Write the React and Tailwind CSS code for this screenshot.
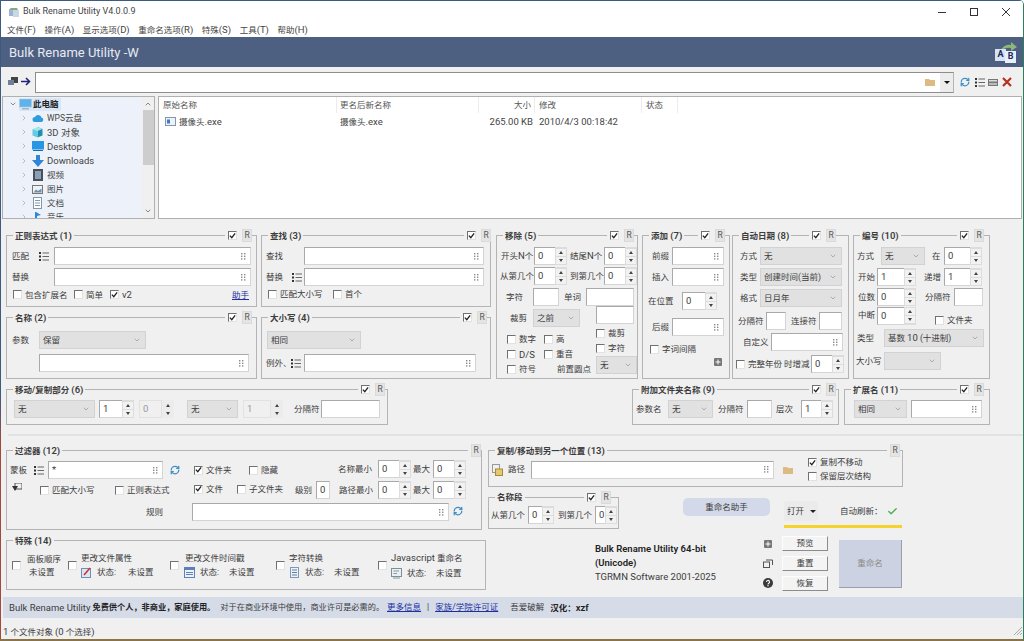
import { ChevronDown, ChevronRight, ChevronUp, RefreshCw, Check as CheckIcon } from "lucide-react";

const Lat = ({ children }) => <span className="text-[9.5px]">{children}</span>;

const L = ({ className = "", children }) => <span className={`whitespace-nowrap shrink-0 ${className}`}>{children}</span>;

const Grip = () => (
    <svg width="5" height="7" viewBox="0 0 5 7" className="shrink-0 fill-[#8a8a8a]">
        <rect x="0" y="0" width="1.4" height="1.4" /><rect x="3" y="0" width="1.4" height="1.4" />
        <rect x="0" y="2.6" width="1.4" height="1.4" /><rect x="3" y="2.6" width="1.4" height="1.4" />
        <rect x="0" y="5.2" width="1.4" height="1.4" /><rect x="3" y="5.2" width="1.4" height="1.4" />
    </svg>
);

const Input = ({ className = "", grip, children }) => (
    <div className={`h-[18px] shrink-0 bg-white border border-[#a9a9a9] border-r-[#d4d4d4] border-b-[#d4d4d4] flex items-center justify-between pl-[3px] pr-[4px] text-[9.5px] ${className}`}>
        <span>{children}</span>
        {grip && <Grip />}
    </div>
);

const Select = ({ className = "", disabled, children }) => (
    <div className={`h-[18px] shrink-0 bg-[#e1e1e1] border border-[#d2d2d2] flex items-center justify-between pl-[3px] pr-[4px] ${disabled ? "text-[#9a9a9a]" : "text-[#3c3c3c]"} ${className}`}>
        <span className="whitespace-nowrap">{children}</span>
        <ChevronDown size={8} strokeWidth={1.5} className="text-[#777] shrink-0" />
    </div>
);

const Spin = ({ className = "", disabled, children }) => (
    <div className={`h-[18px] shrink-0 flex items-stretch ${className}`}>
        <div className={`flex-1 flex items-center pl-[3px] text-[9.5px] border ${disabled ? "bg-[#f0f0f0] border-[#e2e2e2] text-[#999]" : "bg-white border-[#a9a9a9] border-r-0 border-b-[#d4d4d4]"}`}>{children}</div>
        <div className={`w-[12px] flex flex-col items-center justify-center gap-[1px] ${disabled ? "bg-[#ececec]" : "bg-[#dcdcdc]"}`}>
            <div className={`w-[10px] h-[7px] flex items-center justify-center ${disabled ? "" : "bg-[#f2f2f2]"}`}>
                <div className="border-x-[2.5px] border-x-transparent border-b-[3px] border-b-[#444]" />
            </div>
            <div className={`w-[10px] h-[7px] flex items-center justify-center ${disabled ? "" : "bg-[#f2f2f2]"}`}>
                <div className="border-x-[2.5px] border-x-transparent border-t-[3px] border-t-[#444]" />
            </div>
        </div>
    </div>
);

const Cb = ({ checked, className = "" }) => (
    <div className={`w-[9px] h-[9px] shrink-0 bg-white border border-t-[#707070] border-l-[#707070] border-r-[#e2e2e2] border-b-[#e2e2e2] flex items-center justify-center ${className}`}>
        {checked && (
            <svg width="8" height="8" viewBox="0 0 8 8" className="fill-none stroke-[#222] stroke-[1.5]">
                <path d="M1 3.5 L3.2 6 L7 1" />
            </svg>
        )}
    </div>
);

const ListIc = ({ className = "" }) => (
    <svg width="10" height="9" viewBox="0 0 10 9" className={`shrink-0 ${className}`}>
        <rect x="0" y="0" width="2" height="2" fill="#333" /><rect x="0" y="3.5" width="2" height="2" fill="#333" /><rect x="0" y="7" width="2" height="2" fill="#333" />
        <path d="M3.5 1 H10 M3.5 4.5 H10 M3.5 8 H10" stroke="#666" strokeWidth="1" />
    </svg>
);

const Folder = ({ className = "" }) => (
    <svg width="10" height="8" viewBox="0 0 10 8" className={`shrink-0 ${className}`}>
        <path d="M0 1 H4 L5 2 H10 V8 H0 Z" fill="#dcbb82" />
    </svg>
);

const Refresh = ({ className = "" }) => <RefreshCw size={10} strokeWidth={3} className={`text-[#3f8fc6] shrink-0 ${className}`} />;

const Panel = ({ name, num, cb = true, r = true, hr = "mr-[3px]", className = "", children }) => (
    <div className={`border border-[#b4b4b4] shrink-0 flex flex-col ${className}`}>
        <div className={`-mt-[8px] h-[15px] flex items-center justify-between ml-[6px] ${hr}`}>
            <span className="bg-[#f0f0f0] px-[2px] font-semibold whitespace-nowrap">
                {name}{num && <> <Lat>({num})</Lat></>}
            </span>
            <span className="bg-[#f0f0f0] pl-[3px] flex items-center gap-[5px]">
                {cb && <Cb checked />}
                {r && <span className="w-[10px] h-[13px] bg-[#e4e4e4] border border-[#dadada] flex items-center justify-center text-[8.5px] text-[#555]">R</span>}
            </span>
        </div>
        {children}
    </div>
);

const Row = ({ className = "", children }) => <div className={`flex items-center ${className}`}>{children}</div>;

const CbL = ({ checked, className = "", children }) => (
    <div className={`flex items-center gap-[3px] shrink-0 whitespace-nowrap ${className}`}>
        <Cb checked={checked} />
        <span>{children}</span>
    </div>
);

const M = ({ t, k }) => <span className="whitespace-nowrap">{t}<Lat>({k})</Lat></span>;

const Btn = ({ children }) => (
    <div className="h-[15px] w-[46px] bg-[#f4f4f4] border border-t-[#fdfdfd] border-l-[#fdfdfd] border-r-[#8c8c8c] border-b-[#8c8c8c] flex items-center justify-center">{children}</div>
);

const treeRows = [
    ["WPS云盘", <svg key="a" width="12" height="10" viewBox="0 0 12 10"><path d="M3 9 A2.5 2.5 0 0 1 3 4 A3.5 3.5 0 0 1 9.5 4.5 A2.3 2.3 0 0 1 9.5 9 Z" fill="#2f9be0" /></svg>],
    ["3D 对象", <svg key="b" width="11" height="12" viewBox="0 0 11 12"><path d="M5.5 1 L10.5 3 V9.5 L5.5 11.5 Z" fill="#1f8fb0" /><path d="M5.5 1 L0.5 3 L5.5 5 L10.5 3 Z" fill="#a6e4f2" /><path d="M0.5 3 V9.5 L5.5 11.5 V5 Z" fill="#63cbe4" /></svg>],
    ["Desktop", <svg key="c" width="12" height="10" viewBox="0 0 12 10"><rect x="0" y="0" width="12" height="8.5" fill="#2796e4" /><rect x="1" y="9" width="10" height="1" fill="#0f6cb5" /></svg>],
    ["Downloads", <svg key="d" width="12" height="12" viewBox="0 0 12 12"><path d="M4 0 H8 V5 H12 L6 12 L0 5 H4 Z" fill="#2f86d8" /></svg>],
    ["视频", <svg key="e" width="10" height="12" viewBox="0 0 10 12"><rect width="10" height="12" fill="#4a4f58" /><rect x="2" y="2" width="6" height="8" fill="#8aa0b8" /></svg>],
    ["图片", <svg key="f" width="11" height="9" viewBox="0 0 11 9"><rect x="0.5" y="0.5" width="10" height="8" fill="#eef2f6" stroke="#777" /><path d="M1.5 7.5 L4 4.5 L6 6 L9.5 3.5 V7.5 Z" fill="#6f8fa8" /></svg>],
    ["文档", <svg key="g" width="9" height="12" viewBox="0 0 9 12"><rect x="0.5" y="0.5" width="8" height="11" fill="#fff" stroke="#8a96a4" /><path d="M2 3.5 H7 M2 6 H7 M2 8.5 H7" stroke="#7a9ab8" /></svg>],
    ["音乐", <svg key="h" width="10" height="12" viewBox="0 0 10 12"><path d="M3 1 L8 4 L4 5 V10 H2 V1 Z" fill="#2f86d8" /></svg>],
];

const App = () => {
    return (
        <div className="w-[1024px] h-[641px] overflow-hidden pl-[1px] pt-[1px] border-r border-r-[#2e7d5b] border-b-2 border-b-[#8b7448] rounded-tr-[5px] bg-[linear-gradient(180deg,#3d5a82_0%,#3d5a82_62%,#a5483c_70%,#a5483c_100%)] font-['Roboto','Noto_Sans_CJK_SC',sans-serif] text-[8.5px] leading-none text-[#3c3c3c]">
            <div className="w-full h-full bg-[#f0f0f0] flex flex-col overflow-hidden">
                {/* title bar and menu */}
                <div className="bg-white h-[36px] shrink-0">
                    <div className="h-[21px] flex items-center pl-[8px]">
                        <svg width="10" height="10" viewBox="0 0 10 10" className="shrink-0">
                            <rect x="0" y="2" width="6" height="7" fill="#9db3cf" /><rect x="4" y="3" width="6" height="7" fill="#c9d6e6" /><path d="M1 1 H8 L9 3 H2 Z" fill="#7fae7a" />
                        </svg>
                        <span className="ml-[4px] text-[9px] text-[#444]">Bulk Rename Utility V4.0.0.9</span>
                        <div className="ml-auto flex items-center gap-[22px] pr-[12px] text-[#333]">
                            <svg width="10" height="10" viewBox="0 0 10 10"><path d="M1 5.5 H9" stroke="currentColor" /></svg>
                            <svg width="10" height="10" viewBox="0 0 10 10"><rect x="1.5" y="1.5" width="7" height="7" fill="none" stroke="currentColor" /></svg>
                            <svg width="10" height="10" viewBox="0 0 10 10"><path d="M1 1 L9 9 M9 1 L1 9" stroke="currentColor" /></svg>
                        </div>
                    </div>
                    <div className="h-[15px] flex items-center pl-[6px] gap-[8.6px] text-[#444]">
                        <M t="文件" k="F" />
                        <M t="操作" k="A" />
                        <M t="显示选项" k="D" />
                        <M t="重命名选项" k="R" />
                        <M t="特殊" k="S" />
                        <M t="工具" k="T" />
                        <M t="帮助" k="H" />
                    </div>
                </div>

                {/* banner */}
                <div className="h-[30px] shrink-0 bg-[#4e6082] flex items-center justify-between pl-[8px] pr-[7px]">
                    <span className="text-[13px] text-[#e6eaf2]">Bulk Rename Utility -W</span>
                    <div className="relative w-[21px] h-[21px]">
                        <svg width="21" height="10" viewBox="0 0 21 10" className="absolute top-0 left-[2px]"><path d="M2 10 Q8 1 14 3 V0 L20 5 L14 9 V6 Q8 5 2 10 Z" fill="#8db87a" /></svg>
                        <span className="absolute left-0 top-[7px] w-[11px] h-[12px] bg-[#d7e3f2] flex items-center justify-center text-[9px] font-bold text-[#1b2a5c]">A</span>
                        <span className="absolute right-0 top-[9px] w-[11px] h-[12px] bg-[#e9f0f8] flex items-center justify-center text-[9px] font-bold text-[#1b2a5c]">B</span>
                    </div>
                </div>

                {/* path toolbar */}
                <div className="h-[29px] shrink-0 flex items-center pl-[7px] pt-[1px]">
                    <svg width="10" height="9" viewBox="0 0 10 9" className="shrink-0 -mt-[2px]"><rect x="3" y="0" width="7" height="6" fill="#444" /><rect x="0" y="3" width="6" height="5" fill="#6f8096" /></svg>
                    <svg width="10" height="9" viewBox="0 0 10 9" className="ml-[3px] shrink-0 -mt-[2px]"><path d="M0 4.5 H8 M5 1 L8.5 4.5 L5 8" fill="none" stroke="#23237a" strokeWidth="1.6" /></svg>
                    <div className="ml-[4px] w-[919px] h-[21px] shrink-0 bg-white border border-[#8e8e8e] border-r-[#b5b5b5] flex items-center justify-end">
                        <Folder className="mr-[5px]" />
                        <div className="w-[13px] h-[19px] bg-[#ececec] flex items-center justify-center">
                            <div className="border-x-[3px] border-x-transparent border-t-[3px] border-t-[#111]" />
                        </div>
                    </div>
                    <Refresh className="ml-[6px]" />
                    <ListIc className="ml-[5px]" />
                    <svg width="10" height="7" viewBox="0 0 10 7" className="ml-[3px] shrink-0"><rect x="0.5" y="0.5" width="9" height="2.5" fill="#ddd" stroke="#777" /><rect x="0.5" y="3.5" width="9" height="3" fill="#bbb" stroke="#777" /></svg>
                    <svg width="10" height="10" viewBox="0 0 10 10" className="ml-[4px] shrink-0"><path d="M1 1 L9 9 M9 1 L1 9" stroke="#b5321f" strokeWidth="2.2" /></svg>
                </div>

                {/* folder tree and file list */}
                <div className="h-[123px] shrink-0 flex pl-[1px] pr-[1px]">
                    <div className="w-[153px] h-full bg-[#edf2fa] border border-[#b0b0b0] flex overflow-hidden">
                        <div className="flex-1 overflow-hidden">
                            <div className="h-[14px] flex items-center pl-[6px]">
                                <ChevronDown size={8} strokeWidth={2} className="text-[#555]" />
                                <div className="ml-[2px] bg-[#d8e6f6] h-[13px] flex items-center pr-[2px]">
                                    <svg width="13" height="11" viewBox="0 0 13 11"><rect x="0.5" y="0" width="12" height="8" fill="#5fb2ea" stroke="#a9c8df" strokeWidth="0.6" /><rect x="3" y="9" width="7" height="1.5" fill="#9fb7cc" /></svg>
                                    <span className="ml-[1px] font-semibold text-[#222]">此电脑</span>
                                </div>
                            </div>
                            {treeRows.map(([label, icon]) => (
                                <div key={label} className="h-[14.2px] flex items-center pl-[17px]">
                                    <ChevronRight size={8} strokeWidth={2} className="text-[#a0a0a0] shrink-0" />
                                    <div className="ml-[3px] w-[13px] flex justify-center shrink-0">{icon}</div>
                                    <span className="ml-[3px] whitespace-nowrap text-[#444]">{/^[A-Z3]/.test(label) && label !== "WPS云盘" ? <Lat>{label}</Lat> : label}</span>
                                </div>
                            ))}
                        </div>
                        <div className="w-[12px] h-full bg-[#f0f0f0] flex flex-col items-center shrink-0">
                            <ChevronUp size={8} strokeWidth={2} className="text-[#555] mt-[3px]" />
                            <div className="w-[11px] h-[55px] bg-[#cdcdcd] mt-[2px]" />
                            <ChevronDown size={8} strokeWidth={2} className="text-[#555] mt-auto mb-[3px]" />
                        </div>
                    </div>
                    <div className="ml-[3px] flex-1 bg-white border border-[#b0b0b0]">
                        <div className="h-[16px] flex items-center text-[#555]">
                            <div className="w-[178px] pl-[4px] h-full flex items-center border-r border-r-[#ececec]">原始名称</div>
                            <div className="w-[142px] pl-[3px] h-full flex items-center border-r border-r-[#ececec]">更名后新名称</div>
                            <div className="w-[56px] pr-[3px] h-full flex items-center justify-end border-r border-r-[#ececec]">大小</div>
                            <div className="w-[107px] pl-[4px] h-full flex items-center border-r border-r-[#ececec]">修改</div>
                            <div className="w-[36px] pl-[4px] h-full flex items-center border-r border-r-[#ececec]">状态</div>
                        </div>
                        <div className="h-[17px] flex items-center text-[#444]">
                            <div className="w-[178px] pl-[6px] flex items-center">
                                <svg width="11" height="9" viewBox="0 0 11 9" className="shrink-0"><rect x="0.5" y="0.5" width="10" height="8" fill="#eef3fa" stroke="#8496ab" /><rect x="2" y="2.5" width="3" height="4" fill="#3a7fc4" /></svg>
                                <span className="ml-[3px]">摄像头<Lat>.exe</Lat></span>
                            </div>
                            <div className="w-[142px] pl-[3px]">摄像头<Lat>.exe</Lat></div>
                            <div className="w-[56px] pr-[2px] text-right whitespace-nowrap"><Lat>265.00 KB</Lat></div>
                            <div className="pl-[4px] whitespace-nowrap"><Lat>2010/4/3 00:18:42</Lat></div>
                        </div>
                    </div>
                </div>

                {/* rename panels, first block */}
                <div className="flex pl-[5px] pt-[16px] shrink-0">
                    <div className="w-[485px] shrink-0 flex flex-col gap-[10px]">
                        <div className="flex gap-[4px]">
                            <Panel name="正则表达式" num="1" hr="mr-[4px]" className="w-[251px] h-[72px]">
                                <Row className="mt-[4px] pl-[5px]">
                                    <L className="w-[27px]">匹配</L><ListIc /><Input grip className="ml-[5px] w-[197px]" />
                                </Row>
                                <Row className="mt-[3px] pl-[5px]">
                                    <L className="w-[42px]">替换</L><Input grip className="w-[197px]" />
                                </Row>
                                <Row className="mt-[4px] pl-[6px]">
                                    <CbL className="w-[61px]">包含扩展名</CbL>
                                    <CbL className="w-[36px]">简单</CbL>
                                    <CbL checked><Lat>v2</Lat></CbL>
                                    <span className="ml-auto mr-[7px] text-[#1a2fa0] underline">助手</span>
                                </Row>
                            </Panel>
                            <Panel name="查找" num="3" hr="-mr-[1px]" className="w-[230px] h-[72px]">
                                <Row className="mt-[4px] pl-[4px]">
                                    <L className="w-[38px]">查找</L><Input grip className="w-[180px]" />
                                </Row>
                                <Row className="mt-[3px] pl-[4px]">
                                    <L className="w-[26px]">替换</L><ListIc /><Input grip className="ml-[2px] w-[180px]" />
                                </Row>
                                <Row className="mt-[4px] pl-[6px]">
                                    <CbL className="w-[65px]">匹配大小写</CbL>
                                    <CbL>首个</CbL>
                                </Row>
                            </Panel>
                        </div>
                        <div className="flex gap-[4px]">
                            <Panel name="名称" num="2" hr="mr-[4px]" className="w-[251px] h-[62px]">
                                <Row className="mt-[6px] pl-[5px]">
                                    <L className="w-[27px]">参数</L><Select className="w-[107px]">保留</Select>
                                </Row>
                                <Row className="mt-[5px] pl-[32px]">
                                    <Input grip className="w-[210px]" />
                                </Row>
                            </Panel>
                            <Panel name="大小写" num="4" className="w-[230px] h-[62px]">
                                <Row className="mt-[6px] pl-[5px]">
                                    <Select className="w-[94px]">相同</Select>
                                </Row>
                                <Row className="mt-[5px] pl-[4px]">
                                    <L className="w-[25px]">例外、</L><ListIc /><Input grip className="ml-[3px] w-[172px]" />
                                </Row>
                            </Panel>
                        </div>
                    </div>
                    <Panel name="移除" num="5" className="ml-[5px] w-[142px] h-[144px]">
                        <Row className="mt-[4px] pl-[4px]">
                            <L className="w-[33px]">开头<Lat>N</Lat>个</L><Spin className="w-[33px]">0</Spin>
                            <L className="ml-[3px] w-[34px]">结尾<Lat>N</Lat>个</L><Spin className="w-[33px]">0</Spin>
                        </Row>
                        <Row className="mt-[2px] pl-[3px]">
                            <L className="w-[34px]">从第几个</L><Spin className="w-[33px]">0</Spin>
                            <L className="ml-[3px] w-[34px]">到第几个</L><Spin className="w-[33px]">0</Spin>
                        </Row>
                        <Row className="mt-[3px] pl-[9px]">
                            <L className="w-[27px]">字符</L><Input className="w-[26px]" />
                            <L className="ml-[5px] w-[22px]">单词</L><Input className="w-[48px]" />
                        </Row>
                        <div className="flex">
                            <div className="w-[99px] shrink-0">
                                <Row className="mt-[3px] pl-[13px]">
                                    <L className="w-[23px]">裁剪</L><Select className="w-[47px] h-[17px]">之前</Select>
                                </Row>
                                <Row className="mt-[5px] h-[15px] pl-[10px]">
                                    <CbL className="w-[37px]">数字</CbL><CbL>高</CbL>
                                </Row>
                                <Row className="h-[15px] pl-[10px]">
                                    <CbL className="w-[37px]"><Lat>D/S</Lat></CbL><CbL>重音</CbL>
                                </Row>
                                <Row className="h-[15px] pl-[10px]">
                                    <CbL className="w-[50px]">符号</CbL><L>前置圆点</L>
                                </Row>
                            </div>
                            <div className="flex-1 min-w-0">
                                <Input className="w-[38px]" />
                                <CbL className="mt-[3px] h-[12px]">裁剪</CbL>
                                <CbL className="mt-[3px] h-[12px]">字符</CbL>
                                <Select className="mt-[2px] w-[41px]">无</Select>
                            </div>
                        </div>
                    </Panel>
                    <Panel name="添加" num="7" hr="mr-[4px]" className="ml-[4px] w-[88px] h-[144px]">
                        <Row className="mt-[4px] pl-[9px]">
                            <L className="w-[20px]">前缀</L><Input grip className="w-[52px]" />
                        </Row>
                        <Row className="mt-[3px] pl-[9px]">
                            <L className="w-[20px]">插入</L><Input grip className="w-[52px]" />
                        </Row>
                        <Row className="mt-[6px] pl-[5px]">
                            <L className="w-[34px]">在位置</L><Spin className="w-[35px]">0</Spin>
                        </Row>
                        <Row className="mt-[8px] pl-[9px]">
                            <L className="w-[20px]">后缀</L><Input grip className="w-[52px]" />
                        </Row>
                        <CbL className="mt-[7px] ml-[7px] h-[12px]">字词间隔</CbL>
                        <Row className="mt-[3px] justify-end pr-[7px]">
                            <svg width="8" height="8" viewBox="0 0 8 8"><rect width="8" height="8" rx="1" fill="#777" /><path d="M4 1.5 V6.5 M1.5 4 H6.5" stroke="#fff" /></svg>
                        </Row>
                    </Panel>
                    <Panel name="自动日期" num="8" hr="mr-[12px]" className="ml-[2px] w-[117px] h-[144px]">
                        <Row className="mt-[4px] pl-[7px]">
                            <L className="w-[20px]">方式</L><Select className="w-[82px]">无</Select>
                        </Row>
                        <Row className="mt-[3px] pl-[7px]">
                            <L className="w-[20px]">类型</L><Select className="w-[82px]">创建时间(当前)</Select>
                        </Row>
                        <Row className="mt-[3px] pl-[7px]">
                            <L className="w-[20px]">格式</L><Select className="w-[82px]">日月年</Select>
                        </Row>
                        <Row className="mt-[5px] pl-[5px]">
                            <L className="w-[28px]">分隔符</L><Input className="w-[20px]" />
                            <L className="ml-[5px] w-[28px]">连接符</L><Input className="w-[23px]" />
                        </Row>
                        <Row className="mt-[3px] pl-[10px]">
                            <L className="w-[28px]">自定义</L><Input grip className="w-[72px]" />
                        </Row>
                        <Row className="mt-[4px] pl-[3px]">
                            <CbL className="w-[47px]">完整年份</CbL>
                            <L className="ml-[1px] w-[27px]">时增减</L><Spin className="w-[33px]">0</Spin>
                        </Row>
                    </Panel>
                    <Panel name="编号" num="10" hr="mr-[5px]" className="ml-[4px] w-[137px] h-[144px]">
                        <Row className="mt-[4px] pl-[3px]">
                            <L className="w-[24px]">方式</L><Select className="w-[44px]">无</Select>
                            <L className="ml-[7px] w-[12px]">在</L><Spin className="w-[38px]">0</Spin>
                        </Row>
                        <Row className="mt-[3px] pl-[4px]">
                            <L className="w-[19px]">开始</L><Spin className="w-[39px]">1</Spin>
                            <L className="ml-[8px] w-[20px]">递增</L><Spin className="w-[38px]">1</Spin>
                        </Row>
                        <Row className="mt-[2px] pl-[4px]">
                            <L className="w-[19px]">位数</L><Spin className="w-[39px]">0</Spin>
                            <L className="ml-[9px] w-[29px]">分隔符</L><Input className="w-[29px]" />
                        </Row>
                        <Row className="pl-[4px]">
                            <L className="w-[19px]">中断</L><Spin className="w-[39px]">0</Spin>
                            <CbL className="ml-[19px] mt-[10px]">文件夹</CbL>
                        </Row>
                        <Row className="mt-[4px] pl-[3px]">
                            <L className="w-[27px]">类型</L><Select className="w-[100px]">基数 <Lat>10</Lat> (十进制)</Select>
                        </Row>
                        <Row className="mt-[5px] pl-[2px]">
                            <L className="w-[28px]">大小写</L><Select disabled className="w-[57px]" />
                        </Row>
                    </Panel>
                </div>

                {/* rename panels, second block */}
                <div className="flex pl-[5px] mt-[10px] shrink-0">
                    <Panel name="移动/复制部分" num="6" hr="mr-[2px]" className="w-[382px] h-[36px]">
                        <Row className="mt-[3px] pl-[7px]">
                            <Select className="w-[81px]">无</Select>
                            <Spin className="ml-[4px] w-[35px]">1</Spin>
                            <Spin disabled className="ml-[5px] w-[35px]">0</Spin>
                            <Select className="ml-[13px] w-[51px]">无</Select>
                            <Spin disabled className="ml-[5px] w-[40px]">1</Spin>
                            <L className="ml-[11px] w-[27px]">分隔符</L>
                            <Input className="w-[59px]" />
                        </Row>
                    </Panel>
                    <Panel name="附加文件夹名称" num="9" hr="mr-[2px]" className="ml-[244px] w-[207px] h-[36px]">
                        <Row className="mt-[3px] pl-[3px]">
                            <L className="w-[32px]">参数名</L><Select className="w-[45px]">无</Select>
                            <L className="ml-[5px] w-[29px]">分隔符</L><Input className="w-[25px]" />
                            <L className="ml-[4px] w-[25px]">层次</L><Spin className="w-[32px]">1</Spin>
                        </Row>
                    </Panel>
                    <Panel name="扩展名" num="11" hr="mr-[5px]" className="ml-[5px] w-[146px] h-[36px]">
                        <Row className="mt-[3px] pl-[9px]">
                            <Select className="w-[53px]">相同</Select>
                            <Input grip className="ml-[4px] w-[71px]" />
                        </Row>
                    </Panel>
                </div>

                <div className="mt-[9px] ml-[7px] h-[2px] bg-[#e2e2e2] shrink-0" />

                {/* filters, special and run area */}
                <div className="mt-[14px] h-[147px] shrink-0 flex pl-[5px]">
                    <div className="w-[480px] shrink-0 flex flex-col gap-[10px]">
                        <Panel name="过滤器" num="12" cb={false} hr="mr-0" className="w-[476px] h-[80px]">
                            <div className="flex items-center mt-[3px] pl-[3px]">
                                <L className="w-[24px]">蒙板</L><ListIc /><Input grip className="ml-[4px] w-[115px]">*</Input>
                                <Refresh className="ml-[7px]" />
                                <CbL checked className="ml-[14px] w-[55px]">文件夹</CbL>
                                <CbL className="w-[89px]">隐藏</CbL>
                                <L className="w-[40px] -mt-[2px]">名称最小</L><Spin className="w-[33px] -mt-[2px]">0</Spin>
                                <L className="ml-[2px] w-[20px] -mt-[2px]">最大</L><Spin className="w-[33px] -mt-[2px]">0</Spin>
                            </div>
                            <div className="flex items-center h-[18px] mt-[2px] pl-[5px]">
                                <svg width="10" height="9" viewBox="0 0 10 9" className="shrink-0 -mt-[6px]"><rect x="3" y="0" width="7" height="6" fill="none" stroke="#555" /><path d="M0 3 H6 L3 8 Z" fill="#333" /></svg>
                                <CbL className="ml-[18px] w-[75px]">匹配大小写</CbL>
                                <CbL className="w-[79px]">正则表达式</CbL>
                                <CbL checked className="-mt-[2px] w-[43px]">文件</CbL>
                                <CbL className="-mt-[2px] w-[58px]">子文件夹</CbL>
                                <L className="w-[21px]">级别</L><Input className="w-[14px]">0</Input>
                                <L className="ml-[9px] w-[39px]">路径最小</L><Spin className="w-[33px]">0</Spin>
                                <L className="ml-[2px] w-[20px]">最大</L><Spin className="w-[33px]">0</Spin>
                            </div>
                            <div className="flex items-center mt-[4px] pl-[139px]">
                                <L className="w-[46px]">规则</L><Input grip className="w-[257px]" />
                                <Refresh className="ml-[4px] -mt-[2px]" />
                            </div>
                        </Panel>
                        <Panel name="特殊" num="14" cb={false} r={false} className="w-[480px] h-[50px]">
                            <div className="flex items-center pl-[5px] mt-[5px]">
                                <Cb />
                                <div className="ml-[6px] w-[41px] flex flex-col gap-[5px] items-start">
                                    <L>面板顺序</L>
                                    <L className="ml-[2px]">未设置</L>
                                </div>
                                <Cb />
                                <div className="ml-[4px] w-[87px] flex flex-col gap-[5px]">
                                    <L>更改文件属性</L>
                                    <div className="flex items-center">
                                        <svg width="11" height="11" viewBox="0 0 11 11" className="shrink-0"><rect x="0.5" y="1.5" width="9" height="9" fill="#dbe6f3" stroke="#6f8fb8" /><path d="M3 8 L9 1" stroke="#c33" strokeWidth="1.6" /></svg>
                                        <L className="ml-[5px] w-[31px]">状态:</L>
                                        <L>未设置</L>
                                    </div>
                                </div>
                                <Cb className="ml-[2px]" />
                                <div className="ml-[6px] w-[91px] flex flex-col gap-[5px]">
                                    <L>更改文件时间戳</L>
                                    <div className="flex items-center -ml-[1px]">
                                        <svg width="11" height="11" viewBox="0 0 11 11" className="shrink-0"><rect x="0.5" y="0.5" width="10" height="10" fill="#eef2f8" stroke="#5f7fb8" /><rect x="0.5" y="0.5" width="10" height="2.5" fill="#5f7fb8" /><path d="M2 5.5 H9 M2 7.5 H9" stroke="#5f7fb8" /></svg>
                                        <L className="ml-[5px] w-[29px]">状态:</L>
                                        <L>未设置</L>
                                    </div>
                                </div>
                                <Cb />
                                <div className="ml-[4px] w-[89px] flex flex-col gap-[5px]">
                                    <L>字符转换</L>
                                    <div className="flex items-center">
                                        <svg width="11" height="11" viewBox="0 0 11 11" className="shrink-0"><rect x="1.5" y="0.5" width="8" height="10" fill="#eef2f8" stroke="#7f9ab8" /><path d="M3 3 H8 M3 5.5 H8 M3 8 H8" stroke="#5f7fa8" /></svg>
                                        <L className="ml-[5px] w-[29px]">状态:</L>
                                        <L>未设置</L>
                                    </div>
                                </div>
                                <Cb />
                                <div className="ml-[4px] flex flex-col gap-[5px]">
                                    <L><Lat>Javascript</Lat> 重命名</L>
                                    <div className="flex items-center">
                                        <svg width="11" height="11" viewBox="0 0 11 11" className="shrink-0"><rect x="0.5" y="0.5" width="10" height="8" fill="#e8eef2" stroke="#7f8f9a" /><path d="M2 10 H9 M2.5 3 H8 M2.5 5.5 H6" stroke="#7f9f9a" /></svg>
                                        <L className="ml-[5px] w-[29px]">状态:</L>
                                        <L>未设置</L>
                                    </div>
                                </div>
                            </div>
                        </Panel>
                    </div>
                    <div className="ml-[2px] flex-1 min-w-0 flex flex-col">
                        <Panel name="复制/移动到另一个位置" num="13" cb={false} hr="mr-[2px]" className="w-[415px] h-[37px]">
                            <Row className="mt-0 pl-[3px]">
                                <svg width="11" height="12" viewBox="0 0 11 12" className="shrink-0"><rect x="0.5" y="0.5" width="7" height="8" fill="#eef0f2" stroke="#999" /><rect x="3.5" y="5" width="7" height="6.5" fill="#e6c86e" stroke="#a58a3a" /></svg>
                                <L className="ml-[5px] w-[23px]">路径</L>
                                <Input grip className="w-[243px]" />
                                <Folder className="ml-[9px]" />
                                <div className="ml-[15px] flex flex-col gap-[5px]">
                                    <CbL checked>复制不移动</CbL>
                                    <CbL>保留层次结构</CbL>
                                </div>
                            </Row>
                        </Panel>
                        <div className="mt-[10px] flex h-[32px] shrink-0">
                            <Panel name="名称段" hr="mr-[7px]" className="w-[131px] h-[32px]">
                                <Row className="mt-[1px] pl-[2px]">
                                    <L className="w-[37px]">从第几个</L><Spin className="w-[26px]">0</Spin>
                                    <L className="ml-[4px] w-[37px]">到第几个</L><Spin className="w-[22px]">0</Spin>
                                </Row>
                            </Panel>
                            <div className="ml-[64px] mt-[1px] w-[87px] h-[18px] bg-[#d3d9e8] rounded-[5px] flex items-center justify-center">重命名助手</div>
                            <div className="ml-[14px] w-[118px] shrink-0">
                                <div className="mt-[4px] h-[20px] flex items-center">
                                    <div className="w-[34px] h-[20px] bg-[#ebebeb] rounded-[3px] flex items-center pl-[3px]">
                                        <span>打开</span>
                                        <div className="ml-[6px] border-x-[3px] border-x-transparent border-t-[3px] border-t-[#222]" />
                                    </div>
                                    <span className="ml-[22px] w-[47px] whitespace-nowrap">自动刷新：</span>
                                    <CheckIcon size={11} strokeWidth={3} className="text-[#4caf50]" />
                                </div>
                                <div className="mt-[4px] h-[3px] bg-[#f5d22e]" />
                            </div>
                        </div>
                        <div className="mt-[7px] flex">
                            <div className="ml-[107px] w-[168px] pt-[6px] text-[9.5px] leading-[14px]">
                                <div className="font-semibold text-[#222]">Bulk Rename Utility 64-bit</div>
                                <div className="font-semibold text-[#222]">(Unicode)</div>
                                <div>TGRMN Software 2001-2025</div>
                            </div>
                            <div className="w-[10px] h-[55px] flex flex-col items-center justify-between pt-[4px] pb-[3px]">
                                <svg width="8" height="8" viewBox="0 0 8 8"><rect width="8" height="8" rx="1" fill="#777" /><path d="M4 1.5 V6.5 M1.5 4 H6.5" stroke="#fff" /></svg>
                                <svg width="10" height="9" viewBox="0 0 10 9" className="fill-none stroke-[#555]"><rect x="0.5" y="3" width="6" height="5.5" /><path d="M3 1 H9.5 V6" /></svg>
                                <svg width="10" height="10" viewBox="0 0 10 10">
                                    <circle cx="5" cy="5" r="5" fill="#3a3a3a" />
                                    <path d="M3.5 4 A1.5 1.5 0 1 1 5.8 5.2 C5.2 5.5 5 5.8 5 6.4" fill="none" stroke="#fff" strokeWidth="1.1" />
                                    <rect x="4.4" y="7.1" width="1.2" height="1.2" fill="#fff" />
                                </svg>
                            </div>
                            <div className="ml-[9px] flex flex-col gap-[5px]">
                                <Btn>预览</Btn>
                                <Btn>重置</Btn>
                                <Btn>恢复</Btn>
                            </div>
                            <div className="ml-[11px] mt-[4px] w-[63px] h-[48px] bg-[#cdd2e2] border-r border-b border-[#9a9fb0] flex items-center justify-center text-[#8a8a8a]">重命名</div>
                        </div>
                    </div>
                </div>

                {/* licence strip */}
                <div className="h-[21px] shrink-0 ml-[2px] bg-[#d6dbe8] flex items-center pl-[6px] whitespace-nowrap">
                    <Lat>Bulk Rename Utility</Lat>
                    <span className="ml-[2px] text-[8.2px] font-semibold text-[#222]">免费供个人，非商业，家庭使用。</span>
                    <span className="ml-[5px] text-[8.2px]">对于在商业环境中使用，商业许可是必需的。</span>
                    <span className="ml-[3px] text-[#1a2fa0] underline">更多信息</span>
                    <span className="ml-[6px]">|</span>
                    <span className="ml-[6px] text-[#1a2fa0] underline">家族/学院许可证</span>
                    <span className="ml-[12px]">吾爱破解</span>
                    <span className="ml-[6px] font-semibold text-[#222]">汉化：<Lat>xzf</Lat></span>
                </div>

                {/* status bar */}
                <div className="flex-1 flex items-end justify-between pl-[2px] pb-[3px]">
                    <span className="whitespace-nowrap"><Lat>1</Lat> 个文件对象 <Lat>(0</Lat> 个选择<Lat>)</Lat></span>
                    <svg width="10" height="10" viewBox="0 0 10 10" className="stroke-[#aaa]"><path d="M9 1 L1 9 M9 4 L4 9 M9 7 L7 9" /></svg>
                </div>
            </div>
        </div>
    );
};

export default App;
